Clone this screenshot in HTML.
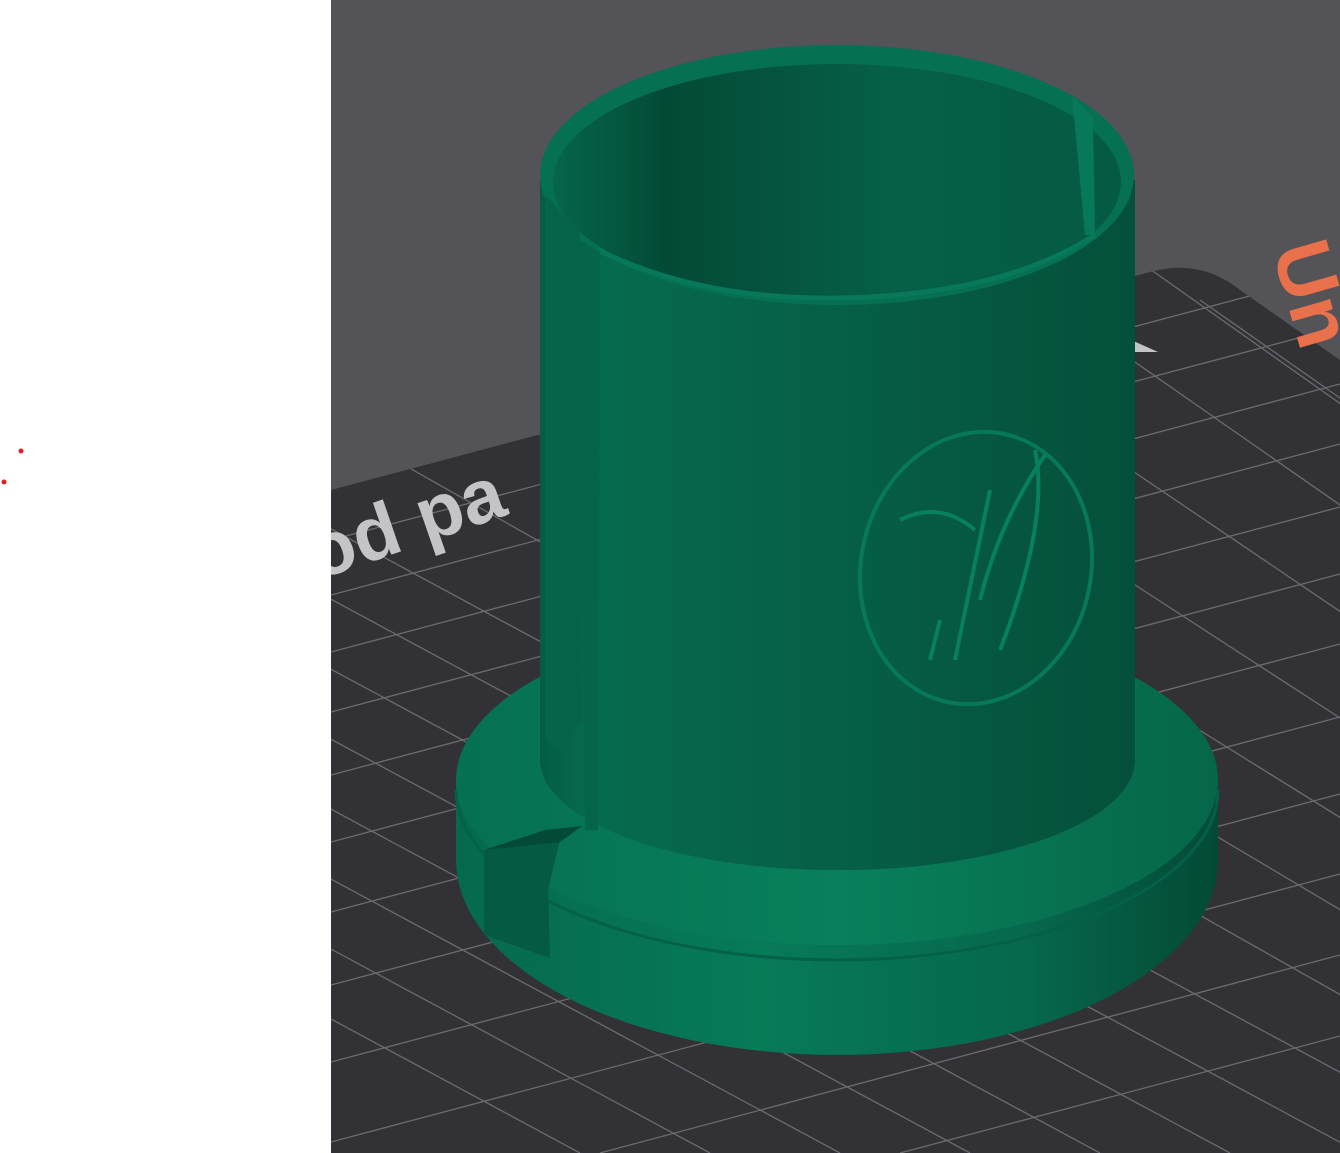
<!DOCTYPE html>
<html><head><meta charset="utf-8"><style>
html,body{margin:0;padding:0;width:1340px;height:1153px;overflow:hidden;background:#fff}
svg{display:block}
</style></head><body>
<svg width="1340" height="1153" viewBox="0 0 1340 1153" xmlns="http://www.w3.org/2000/svg">
<defs>
<clipPath id="bed"><path d="M331 490 L1150 272 Q1200 258 1240 290 L1340 360 L1340 1153 L331 1153 Z"/></clipPath>
<linearGradient id="body" x1="0" x2="1" y1="0" y2="0">
<stop offset="0" stop-color="#045c43"/><stop offset="0.08" stop-color="#066b4f"/><stop offset="0.5" stop-color="#065f47"/><stop offset="0.85" stop-color="#05543e"/><stop offset="1" stop-color="#04503b"/></linearGradient>
<linearGradient id="inner" x1="0" x2="1"><stop offset="0" stop-color="#05664b"/><stop offset="0.2" stop-color="#034a36"/><stop offset="0.6" stop-color="#066048"/><stop offset="1" stop-color="#055a43"/></linearGradient>
<linearGradient id="baseside" x1="0" x2="1"><stop offset="0" stop-color="#056a4d"/><stop offset="0.4" stop-color="#077a58"/><stop offset="0.75" stop-color="#06684c"/><stop offset="1" stop-color="#034a36"/></linearGradient>
<linearGradient id="basetop" x1="0" x2="1"><stop offset="0" stop-color="#067052"/><stop offset="0.5" stop-color="#08805c"/><stop offset="1" stop-color="#066649"/></linearGradient>
</defs>
<rect x="331" y="0" width="1009" height="1153" fill="#545358"/>
<path d="M331 490 L1150 272 Q1200 258 1240 290 L1340 360 L1340 1153 L331 1153 Z" fill="#323135"/>
<g clip-path="url(#bed)" stroke="#6c6b70" stroke-width="1.3" fill="none">
<path d="M331 540 L1340 272M331 595 L1340 327M331 652 L1340 384M331 712 L1340 444M331 775 L1340 507M331 842 L1340 574M331 912 L1340 644M331 985 L1340 717M331 1062 L1340 794M331 1142 L1340 874M600 1153 L1340 955M900 1153 L1340 1036"/>
<path d="M1140 262 L2400 1153M1010 275 L2270 1153M880 300 L2140 1153M750 335 L2010 1153M620 370 L1880 1153M490 405 L1750 1153M360 440 L1620 1153M231 475 L1490 1153M100 475 L1360 1153M-30 475 L1230 1153M-160 475 L1100 1153M-290 475 L970 1153M-420 475 L840 1153M-550 475 L710 1153M-680 475 L580 1153M1200 300 L1340 398"/>
</g>
<g clip-path="url(#bed)">
<text transform="translate(318,580) rotate(-19)" font-family="Liberation Sans,sans-serif" font-weight="bold" font-size="76" fill="#c4c4c6">od pa</text>
</g>
<text transform="translate(1272,250) rotate(74)" font-family="Liberation Sans,sans-serif" font-weight="bold" font-size="80" fill="#e8704a">Un</text>
<path d="M1120 335 L1158 352 L1120 352 Z" fill="#c4c4c6"/>
<path d="M456 780 L456 860 A381 195 0 0 0 1218 860 L1218 780 Z" fill="url(#baseside)"/>
<ellipse cx="837" cy="780" rx="381" ry="165" fill="url(#basetop)"/>
<path d="M456 790 A381 170 0 0 0 1218 790" fill="none" stroke="#046148" stroke-width="3"/>
<path d="M484 850 L560 840 L548 890 L550 958 L484 935 Z" fill="#045a42"/>
<path d="M484 850 L545 830 L582 826 L560 842 Z" fill="#034a36"/>
<path d="M540 180 L540 760 A297 110 0 0 0 1135 760 L1135 180 Z" fill="url(#body)"/>
<ellipse cx="837" cy="175" rx="297" ry="130" fill="#067052"/>
<ellipse cx="837" cy="182" rx="284" ry="118" fill="url(#inner)"/>
<path d="M598 250 Q700 300 837 298 Q1000 296 1095 235" fill="none" stroke="#07785a" stroke-width="5"/>
<path d="M600 252 L600 330 L598 830 L585 830 L580 240 Z" fill="#056549"/>
<path d="M545 195 L580 232 L583 720 L560 750 L545 740 Z" fill="#05644a"/>
<path d="M1072 95 L1085 235 L1095 235 L1093 118 Z" fill="#07785a"/>
<ellipse cx="976" cy="568" rx="115" ry="137" transform="rotate(12 976 568)" fill="none" stroke="#07785a" stroke-width="4"/>
<path d="M900 520 Q940 500 975 530 M990 490 L955 660 M1045 455 Q1000 520 980 600 M1035 450 Q1050 520 1000 650 M940 620 L930 660" fill="none" stroke="#07805d" stroke-width="4"/>
<circle cx="21" cy="451" r="2.5" fill="#e02020"/>
<circle cx="4" cy="482" r="2.5" fill="#e02020"/>
</svg>
</body></html>
